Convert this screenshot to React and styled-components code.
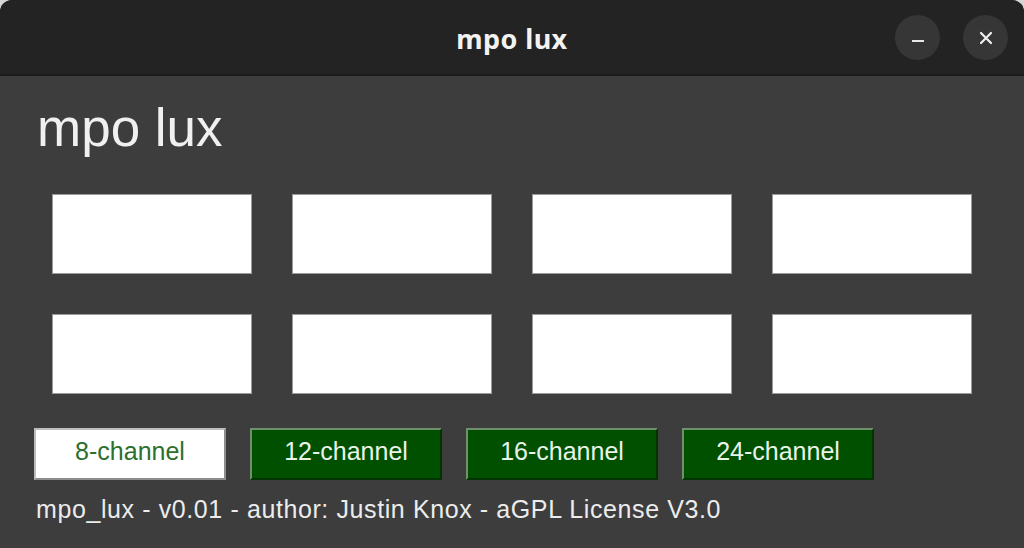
import React from "react";
import styled, { createGlobalStyle } from "styled-components";

const GlobalStyle = createGlobalStyle`
  html, body {
    margin: 0;
    padding: 0;
    background: #d6d6d6;
  }
  * {
    box-sizing: border-box;
  }
`;

const Window = styled.div`
  display: flex;
  flex-direction: column;
  width: 1024px;
  height: 548px;
  border-radius: 12px 12px 0 0;
  overflow: hidden;
  background: #3d3d3d;
`;

const TitleBar = styled.div`
  position: relative;
  display: flex;
  align-items: center;
  justify-content: center;
  height: 76px;
  flex-shrink: 0;
  background: #232323;
  border-bottom: 2px solid #1b1b1b;
`;

const Title = styled.div`
  font-family: "Noto Sans", sans-serif;
  font-weight: 700;
  font-size: 27px;
  letter-spacing: 0.4px;
  color: #f2f2f2;
  padding-top: 2px;
`;

const Controls = styled.div`
  position: absolute;
  right: 16px;
  top: 15px;
  display: flex;
  gap: 23px;
`;

const RoundButton = styled.div`
  width: 45px;
  height: 45px;
  border-radius: 50%;
  background: #363636;
  display: flex;
  align-items: center;
  justify-content: center;

  svg {
    display: block;
  }
`;

const Body = styled.div`
  flex: 1;
  display: flex;
  flex-direction: column;
  padding: 27px 34px 0 34px;
  font-family: "Liberation Sans", Arial, sans-serif;
`;

const Heading = styled.h1`
  margin: 0 0 0 3px;
  height: 51px;
  font-weight: 400;
  font-size: 53px;
  line-height: 50px;
  color: #f0f0f0;
`;

const Grid = styled.div`
  display: grid;
  grid-template-columns: repeat(4, 200px);
  grid-auto-rows: 80px;
  gap: 40px;
  margin: 40px 0 0 18px;
`;

const Slot = styled.div`
  background: #ffffff;
  border: 1px solid #9a9a9a;
`;

const ButtonRow = styled.div`
  display: flex;
  gap: 24px;
  margin-top: 34px;
`;

const ChannelButton = styled.div`
  width: 192px;
  height: 52px;
  display: flex;
  align-items: center;
  justify-content: center;
  padding-bottom: 5px;
  font-size: 25px;
  border: 2px solid;
  background: ${(p) => (p.$active ? "#ffffff" : "#005000")};
  color: ${(p) => (p.$active ? "#2d6f2d" : "#e8f4e8")};
  border-color: ${(p) =>
    p.$active
      ? "#bdbdbd #8e8e8e #8e8e8e #bdbdbd"
      : "#6f8f6f #003400 #003400 #6f8f6f"};
`;

const Footer = styled.div`
  margin-top: 16px;
  padding-left: 2px;
  font-size: 25px;
  letter-spacing: 0.6px;
  line-height: 26px;
  color: #ececec;
`;

const channels = [8, 12, 16, 24];

export default function App() {
  return (
    <>
      <GlobalStyle />
      <Window>
        <TitleBar>
          <Title>mpo lux</Title>
          <Controls>
            <RoundButton>
              <svg width="14" height="14" viewBox="0 0 14 14">
                <path d="M1 10h12" stroke="#e8e8e8" strokeWidth="2.2" />
              </svg>
            </RoundButton>
            <RoundButton>
              <svg width="14" height="14" viewBox="0 0 14 14">
                <path
                  d="M2 2l10 10M12 2L2 12"
                  stroke="#f0f0f0"
                  strokeWidth="2.2"
                  strokeLinecap="round"
                />
              </svg>
            </RoundButton>
          </Controls>
        </TitleBar>
        <Body>
          <Heading>mpo lux</Heading>
          <Grid>
            {Array.from({ length: 8 }).map((_, i) => (
              <Slot key={i} />
            ))}
          </Grid>
          <ButtonRow>
            {channels.map((c, i) => (
              <ChannelButton key={c} $active={i === 0}>
                {c}-channel
              </ChannelButton>
            ))}
          </ButtonRow>
          <Footer>mpo_lux - v0.01 - author: Justin Knox - aGPL License V3.0</Footer>
        </Body>
      </Window>
    </>
  );
}
